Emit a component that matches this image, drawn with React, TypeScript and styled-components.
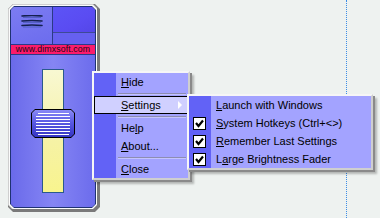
import React from "react";
import styled, { createGlobalStyle } from "styled-components";

const GlobalStyle = createGlobalStyle`
  html, body { margin: 0; padding: 0; background: #eef2f0; }
  #root { width: 380px; height: 218px; }
`;

const chamfer = (n: number) =>
  `polygon(${n}px 0, calc(100% - ${n}px) 0, 100% ${n}px, 100% calc(100% - ${n}px), calc(100% - ${n}px) 100%, ${n}px 100%, 0 calc(100% - ${n}px), 0 ${n}px)`;

const Page = styled.div`
  position: relative;
  width: 380px;
  height: 218px;
  padding: 4px 0 0 8px;
  box-sizing: border-box;
  overflow: hidden;
  font-family: "Liberation Sans", Arial, sans-serif;
`;

const GuideLine = styled.div`
  position: absolute;
  left: 346px;
  top: 0;
  bottom: 0;
  border-left: 1px dotted #3b8de6;
`;

const FrameShade = styled.div`
  width: 92px;
  height: 208px;
  box-sizing: border-box;
  background: #7a7a7a;
  padding: 0 3px 3px 0;
  clip-path: ${chamfer(5)};
  display: flex;
`;

const FrameLight = styled.div`
  flex: 1;
  background: #cfcfcf;
  padding: 1px 0 0 1px;
  clip-path: ${chamfer(4)};
  display: flex;
`;

const FrameWhite = styled.div`
  flex: 1;
  background: #fbfbfb;
  padding: 1px;
  clip-path: ${chamfer(4)};
  display: flex;
`;

const FrameNavy = styled.div`
  flex: 1;
  background: #1f3272;
  padding: 1px;
  clip-path: ${chamfer(4)};
  display: flex;
`;

const Body = styled.div`
  flex: 1;
  display: flex;
  flex-direction: column;
  clip-path: ${chamfer(3)};
  background: #7474ee;
`;

const TopSection = styled.div`
  height: 37px;
  display: flex;
  flex-shrink: 0;
`;

const MenuCell = styled.div`
  width: 41px;
  background: linear-gradient(160deg, #7c7cf2, #6c6cee);
  display: flex;
  align-items: flex-start;
  justify-content: center;
  padding-top: 8px;
  box-sizing: border-box;
`;

const VDivider = styled.div`
  width: 1px;
  background: #2b3a86;
`;

const RightCells = styled.div`
  flex: 1;
  display: flex;
  flex-direction: column;
`;

const DisplayCell = styled.div<{ $h: number; $tone: string }>`
  height: ${(p) => p.$h}px;
  background: ${(p) => p.$tone};
`;

const HDivider = styled.div<{ $color?: string }>`
  height: 1px;
  flex-shrink: 0;
  background: ${(p) => p.$color || "#2b3a86"};
`;

const UrlBar = styled.div`
  height: 9px;
  flex-shrink: 0;
  background: #fb1c6c;
  display: flex;
  align-items: center;
  justify-content: center;
  font-size: 8.8px;
  line-height: 9px;
  color: #1e0612;
  letter-spacing: 0.1px;
`;

const Lower = styled.div`
  flex: 1;
  background: linear-gradient(to right, #6a6aea, #8585f4 50%, #6c6cec);
  display: flex;
  align-items: center;
  justify-content: center;
`;

const Track = styled.div`
  position: relative;
  width: 22px;
  height: 124px;
  box-sizing: border-box;
  border: 1px solid #2a5a8c;
  background: linear-gradient(to bottom, #f8f8d2, #f6f2a4 60%, #f8f48e);
`;

const ThumbBorder = styled.div`
  position: absolute;
  left: -12px;
  width: 44px;
  height: 29px;
  background: #000;
  padding: 1px;
  box-sizing: border-box;
  clip-path: ${chamfer(4)};
  display: flex;
`;

const ThumbFace = styled.div`
  flex: 1;
  clip-path: ${chamfer(3)};
  background: linear-gradient(to bottom, #8a8af6, #5a5ae4 45%, #3434c2);
  display: flex;
  flex-direction: column;
  align-items: center;
  padding-top: 3px;
  gap: 2px;
`;

const Grip = styled.div<{ $w: number }>`
  width: ${(p) => p.$w}px;
  height: 1px;
  background: #ffffff;
`;

const Menu = styled.div<{ $left: number; $top: number; $width: number }>`
  position: absolute;
  left: ${(p) => p.$left}px;
  top: ${(p) => p.$top}px;
  width: ${(p) => p.$width}px;
  box-sizing: border-box;
  border: 2px solid #f6f6f6;
  border-right-color: #cfcfcf;
  border-bottom-color: #cfcfcf;
  box-shadow: 2px 2px 0 #8a8a8a, 4px 4px 2px rgba(0, 0, 0, 0.25);
  background: linear-gradient(to right, #6262f6 22px, #a3a3ff 22px);
  display: flex;
  flex-direction: column;
  font-size: 11px;
  color: #000;
`;

const Item = styled.div<{ $active?: boolean; $indent: number }>`
  height: 18px;
  box-sizing: border-box;
  display: flex;
  align-items: center;
  padding-left: ${(p) => p.$indent}px;
  border: 1px solid ${(p) => (p.$active ? "#000" : "transparent")};
  background: ${(p) => (p.$active ? "#d0d0ff" : "transparent")};
  white-space: nowrap;
`;

const CheckSlot = styled.div`
  width: 26px;
  display: flex;
  align-items: center;
  flex-shrink: 0;
`;

const CheckBox = styled.div`
  width: 13px;
  height: 13px;
  margin-left: 3px;
  box-sizing: border-box;
  border: 1px solid #000;
  background: #fff;
  display: flex;
  align-items: center;
  justify-content: center;
`;

const Arrow = styled.span`
  margin-left: auto;
  margin-right: 5px;
  width: 0;
  height: 0;
  border-top: 4px solid transparent;
  border-bottom: 4px solid transparent;
  border-left: 4px solid #ffffff;
`;

const Separator = styled.div`
  height: 5px;
  display: flex;
  align-items: center;
  padding-left: 24px;
  padding-right: 2px;
  &::after {
    content: "";
    flex: 1;
    height: 1px;
    background: #8d8db2;
    box-shadow: 0 1px 0 #c4c4ff;
  }
`;

const Hamburger = () => (
  <svg width="22" height="13" viewBox="0 0 22 13">
    {[1, 6, 10.5].map((y) => (
      <g key={y}>
        <path d={`M1 ${y} Q11 ${y - 1} 21 ${y}`} stroke="#142050" strokeWidth="1.6" fill="none" strokeLinecap="round" />
        <path d={`M2 ${y + 1.5} L20 ${y + 1.5}`} stroke="#4a5ab8" strokeWidth="0.8" fill="none" />
      </g>
    ))}
  </svg>
);

const Check = () => (
  <svg width="11" height="11" viewBox="0 0 11 11">
    <polyline points="2,5 4.5,8 9,2.5" fill="none" stroke="#000" strokeWidth="2.2" />
  </svg>
);

const grips = [31, 34, 34, 34, 34, 34, 34, 31];

const subItems: { label: React.ReactNode; checked: boolean }[] = [
  { label: <><u>L</u>aunch with Windows</>, checked: false },
  { label: <><u>S</u>ystem Hotkeys (Ctrl+&lt;&gt;)</>, checked: true },
  { label: <><u>R</u>emember Last Settings</>, checked: true },
  { label: <>L<u>a</u>rge Brightness Fader</>, checked: true },
];

export default function App() {
  return (
    <>
      <GlobalStyle />
      <Page>
        <GuideLine />
        <FrameShade>
          <FrameLight>
            <FrameWhite>
              <FrameNavy>
                <Body>
                  <TopSection>
                    <MenuCell>
                      <Hamburger />
                    </MenuCell>
                    <VDivider />
                    <RightCells>
                      <DisplayCell $h={25} $tone="linear-gradient(150deg, #5c54f6, #5a4cf2 60%, #5446e8)" />
                      <HDivider $color="#3e4a96" />
                      <DisplayCell $h={11} $tone="#6660f0" />
                    </RightCells>
                  </TopSection>
                  <HDivider />
                  <UrlBar>www.dimxsoft.com</UrlBar>
                  <HDivider />
                  <Lower>
                    <Track>
                      <ThumbBorder style={{ top: 39 }}>
                        <ThumbFace>
                          {grips.map((w, i) => (
                            <Grip key={i} $w={w} />
                          ))}
                        </ThumbFace>
                      </ThumbBorder>
                    </Track>
                  </Lower>
                </Body>
              </FrameNavy>
            </FrameWhite>
          </FrameLight>
        </FrameShade>

        <Menu $left={92} $top={71} $width={98}>
          <Item $indent={26}><u>H</u>ide</Item>
          <Separator />
          <Item $indent={26} $active>
            <u>S</u>ettings
            <Arrow />
          </Item>
          <Separator />
          <Item $indent={26}>He<u>l</u>p</Item>
          <Item $indent={26}><u>A</u>bout...</Item>
          <Separator />
          <Item $indent={26}><u>C</u>lose</Item>
        </Menu>

        <Menu $left={187} $top={94} $width={186}>
          {subItems.map((s, i) => (
            <Item key={i} $indent={0}>
              <CheckSlot>
                {s.checked && (
                  <CheckBox>
                    <Check />
                  </CheckBox>
                )}
              </CheckSlot>
              {s.label}
            </Item>
          ))}
        </Menu>
      </Page>
    </>
  );
}
